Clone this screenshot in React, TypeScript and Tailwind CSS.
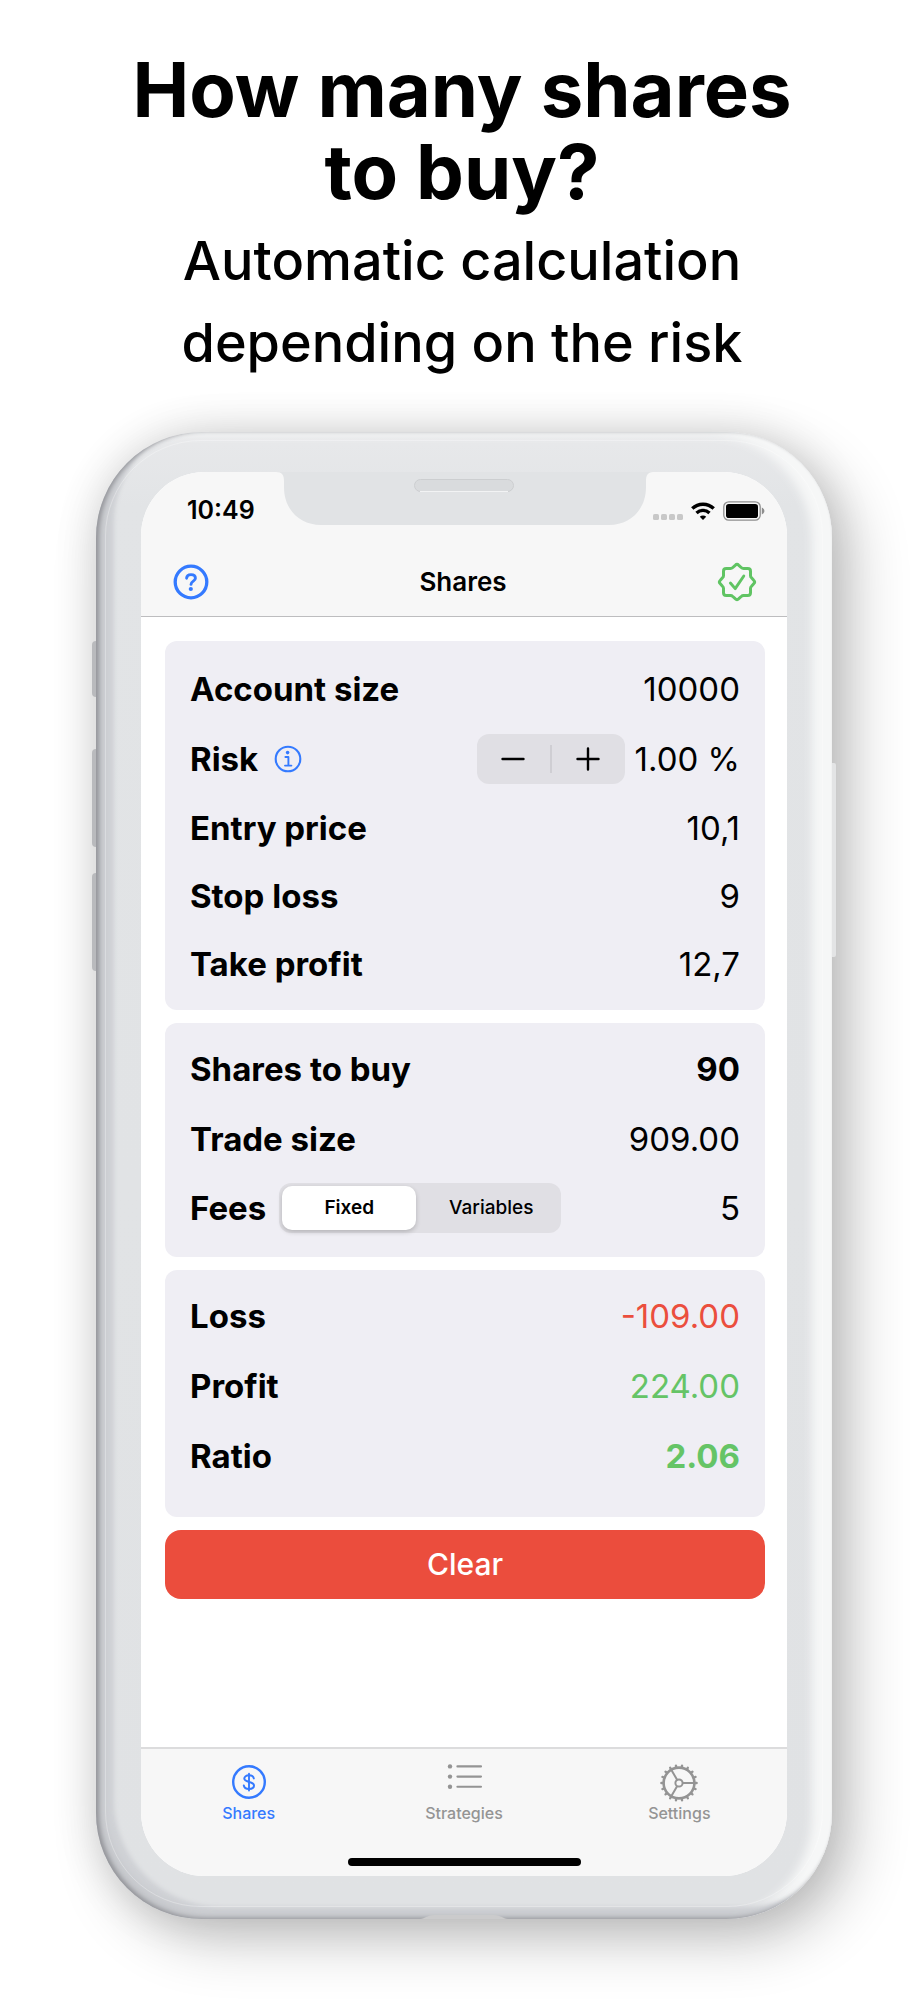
import { useState } from "react";
import type { ReactNode } from "react";

function HelpIcon() {
  return (
    <svg viewBox="0 0 36 36" className="size-9" fill="none" stroke="#347aff" strokeLinecap="round" strokeLinejoin="round">
      <circle cx="18" cy="18" r="15.8" strokeWidth="3.3" />
      <path d="M13.6 14.2C13.8 11.8 15.6 10.6 18 10.6C20.6 10.6 22.4 12 22.4 14.2C22.4 17.2 18 17 18 20.4" strokeWidth="2.9" />
      <circle cx="17.8" cy="25" r="2.1" fill="#347aff" stroke="none" />
    </svg>
  );
}

function SealIcon() {
  return (
    <svg viewBox="-20 -20 40 40" className="size-10" fill="none" stroke="#60c463" strokeLinecap="round" strokeLinejoin="round">
      <path
        strokeWidth="3"
        d="M-1.8 -16.7Q0 -18.5 1.8 -16.7L4.2 -14.5Q5.2 -13.5 6.6 -13.5H10.8Q13.5 -13.5 13.5 -10.8V-6.6Q13.5 -5.2 14.5 -4.2L16.7 -1.8Q18.5 0 16.7 1.8L14.5 4.2Q13.5 5.2 13.5 6.6V10.8Q13.5 13.5 10.8 13.5H6.6Q5.2 13.5 4.2 14.5L1.8 16.7Q0 18.5 -1.8 16.7L-4.2 14.5Q-5.2 13.5 -6.6 13.5H-10.8Q-13.5 13.5 -13.5 10.8V6.6Q-13.5 5.2 -14.5 4.2L-16.7 1.8Q-18.5 0 -16.7 -1.8L-14.5 -4.2Q-13.5 -5.2 -13.5 -6.6V-10.8Q-13.5 -13.5 -10.8 -13.5H-6.6Q-5.2 -13.5 -4.2 -14.5Z"
      />
      <path d="M-6.6 1L-1.8 6.6L6.8 -6" strokeWidth="2.9" />
    </svg>
  );
}

function InfoIcon() {
  return (
    <svg viewBox="0 0 28 28" className="size-7" fill="none" stroke="#347aff" strokeLinecap="round" strokeLinejoin="round">
      <circle cx="14" cy="14" r="12.3" strokeWidth="2.1" />
      <circle cx="13.6" cy="7.6" r="1.8" fill="#347aff" stroke="none" />
      <path d="M11.4 12H14.4V20.4M11 20.6H17.4" strokeWidth="1.9" />
    </svg>
  );
}

function SignalDots() {
  return (
    <svg viewBox="0 0 30 6" className="mt-3 h-[6px] w-[30px]" fill="#c8c8c8">
      <rect x="0" y="0" width="6" height="6" rx="1.6" />
      <rect x="8" y="0" width="6" height="6" rx="1.6" />
      <rect x="16" y="0" width="6" height="6" rx="1.6" />
      <rect x="24" y="0" width="6" height="6" rx="1.6" />
    </svg>
  );
}

function WifiIcon() {
  return (
    <svg viewBox="0 0 24 20" className="h-5 w-6" fill="none" stroke="#000">
      <path d="M1.3 7.5A15.4 15.4 0 0 1 22.7 7.5" strokeWidth="3.5" />
      <path d="M5.5 12A9.4 9.4 0 0 1 18.5 12" strokeWidth="3.3" />
      <path d="M8.8 15.7A4.6 4.6 0 0 1 15.2 15.7L12 19Z" fill="#000" stroke="none" />
    </svg>
  );
}

function BatteryIcon() {
  return (
    <svg viewBox="0 0 42 20" className="h-5 w-[42px]">
      <rect x="0.8" y="0.8" width="36.4" height="18.4" rx="5" fill="none" stroke="#8e8e8e" strokeWidth="1.3" />
      <rect x="3" y="3" width="32" height="14" rx="2.8" fill="#000" />
      <path d="M38.8 6.6C40.6 7.4 41.4 8.6 41.4 10C41.4 11.4 40.6 12.6 38.8 13.4Z" fill="#8e8e8e" />
    </svg>
  );
}

function DollarIcon() {
  return (
    <svg viewBox="-19 -19 38 38" className="size-[38px]" fill="none" stroke="currentColor" strokeLinecap="round" strokeLinejoin="round">
      <circle cy="-1" r="15.8" strokeWidth="2.4" />
      <path d="M0 -9.4V7.6" strokeWidth="1.9" />
      <path d="M4.8 -4.6C4.4 -6.6 2.6 -7.7 0 -7.7C-2.8 -7.7 -4.7 -6.4 -4.7 -4.4C-4.7 0 5 -2.2 5 2.5C5 4.7 3 5.9 0 5.9C-3 5.9 -4.8 4.6 -5.2 2.5" strokeWidth="2" />
    </svg>
  );
}

function ListIcon() {
  return (
    <svg viewBox="0 0 38 38" className="size-[38px]" fill="currentColor" stroke="currentColor" strokeLinecap="round">
      <g stroke="none">
        <circle cx="5" cy="2.4" r="2.2" />
        <circle cx="5" cy="12.6" r="2.2" />
        <circle cx="5" cy="22.8" r="2.2" />
      </g>
      <path d="M12.4 2.4H36M12.4 12.6H36M12.4 22.8H36" strokeWidth="2.1" />
    </svg>
  );
}

const GEAR_TEETH = Array.from({ length: 18 }, (_, i) => i * 20);

function GearIcon() {
  return (
    <svg viewBox="-19 -19 38 38" className="size-[38px]" fill="none" stroke="currentColor" strokeLinecap="round">
      <circle r="15.4" strokeWidth="2.6" />
      {GEAR_TEETH.map((angle) => (
        <path key={angle} d="M16 0H17.6" strokeWidth="2.4" transform={`rotate(${angle})`} />
      ))}
      <circle r="3.6" strokeWidth="2" />
      <path d="M4.4 0H15M-2.2 3.8L-7.6 13.1M-2.2 -3.8L-7.6 -13.1" strokeWidth="2" />
    </svg>
  );
}

const LABEL = "shrink-0 text-[33px] leading-10 font-bold text-black";
const VALUE = "text-[33px] leading-10";

function Card({ children, className }: { children: ReactNode; className: string }) {
  return <section className={`rounded-xl bg-[#efeef4] px-[25px] ${className}`}>{children}</section>;
}

function ResultRow({ label, value, tone }: { label: string; value: string; tone: string }) {
  return (
    <div className="flex h-[70px] items-center justify-between gap-3">
      <span className={LABEL}>{label}</span>
      <output className={`${VALUE} ${tone}`}>{value}</output>
    </div>
  );
}

function FieldRow({
  id,
  label,
  value,
  onChange,
  height,
}: {
  id: string;
  label: string;
  value: string;
  onChange: (value: string) => void;
  height: string;
}) {
  return (
    <div className={`flex items-center gap-3 ${height}`}>
      <label htmlFor={id} className={LABEL}>
        {label}
      </label>
      <input
        id={id}
        inputMode="decimal"
        value={value}
        onChange={(e) => onChange(e.target.value)}
        className={`${VALUE} w-0 min-w-0 flex-1 bg-transparent text-right text-black outline-none`}
      />
    </div>
  );
}

function StepButton({ label, path, onClick }: { label: string; path: string; onClick: () => void }) {
  return (
    <button type="button" aria-label={label} onClick={onClick} className="flex flex-1 items-center justify-center self-stretch">
      <svg viewBox="0 0 24 24" className="size-6" fill="none" stroke="#000" strokeWidth="2.4" strokeLinecap="round">
        <path d={path} />
      </svg>
    </button>
  );
}

const toNumber = (text: string) => Number(text.replace(",", ".")) || 0;

const TABS = [
  { id: "shares", label: "Shares", icon: <DollarIcon /> },
  { id: "strategies", label: "Strategies", icon: <ListIcon /> },
  { id: "settings", label: "Settings", icon: <GearIcon /> },
];

const FEE_MODES = ["Fixed", "Variables"];

export default function App() {
  const [account, setAccount] = useState("10000");
  const [risk, setRisk] = useState(1);
  const [entry, setEntry] = useState("10,1");
  const [stop, setStop] = useState("9");
  const [target, setTarget] = useState("12,7");
  const [fees, setFees] = useState("5");
  const [feeMode, setFeeMode] = useState("Fixed");
  const [tab, setTab] = useState("shares");

  const perShareRisk = toNumber(entry) - toNumber(stop);
  const shares = perShareRisk > 0 ? Math.floor((toNumber(account) * risk) / 100 / perShareRisk) : 0;
  const tradeSize = shares * toNumber(entry);
  const roundTripFees =
    shares === 0 ? 0 : feeMode === "Fixed" ? 2 * toNumber(fees) : (2 * tradeSize * toNumber(fees)) / 100;
  const loss = shares * perShareRisk + roundTripFees;
  const profit = shares * (toNumber(target) - toNumber(entry)) - roundTripFees;
  const ratio = loss > 0 ? profit / loss : 0;

  const clear = () => {
    setAccount("");
    setRisk(1);
    setEntry("");
    setStop("");
    setTarget("");
    setFees("");
  };

  return (
    <div className="min-h-screen overflow-hidden bg-white pb-[81px] font-['Inter','Liberation_Sans',sans-serif] text-black">
      <header className="px-4 pt-12 text-center">
        <h1 className="text-[76px] leading-[82px] font-bold">
          How many shares
          <br />
          to buy?
        </h1>
        <p className="mt-2 text-[54px] leading-[82px] font-medium">
          Automatic calculation
          <br />
          depending on the risk
        </p>
      </header>

      <div className="mt-12 pr-[92px] pl-24">
        <div className="relative rounded-[106px] bg-linear-to-b from-[#e8e9eb] via-[#e2e4e6] via-5% to-[#e0e2e4] px-[45px] pt-10 pb-[43px] shadow-[18px_20px_60px_rgba(0,0,0,0.24),0_0_44px_rgba(0,0,0,0.12)]">
          <div className="absolute top-[209px] -left-1 h-14 w-1 rounded-l-sm bg-[#b9babd]" />
          <div className="absolute top-[317px] -left-1 h-[98px] w-1 rounded-l-sm bg-[#b9babd]" />
          <div className="absolute top-[441px] -left-1 h-[98px] w-1 rounded-l-sm bg-[#b9babd]" />
          <div className="absolute top-[331px] -right-1 h-[194px] w-[6px] rounded-r-xs border-l border-[#cfd1d3] bg-[#e3e4e5]" />
          <div className="pointer-events-none absolute inset-0 rounded-[106px] shadow-[inset_3px_-1px_4px_#95969b,inset_10px_-8px_8px_-2px_#c4c6ca,inset_20px_-14px_4px_-2px_#d0d2d6,inset_-20px_3px_10px_#f6f7f7]" />
          <div className="pointer-events-none absolute inset-x-[9px] top-2 bottom-3 rounded-[96px] border border-white/30" />
          <svg viewBox="0 0 88 5" className="absolute bottom-0 left-[324px] h-[5px] w-[88px]" fill="#cbcbcc">
            <path d="M0 5C5 4.6 8 1 14 1H74C80 1 83 4.6 88 5Z" />
          </svg>

          <div className="relative flex flex-col overflow-hidden rounded-[64px] bg-white">
            <svg viewBox="0 0 378 54" className="absolute inset-x-0 top-0 mx-auto h-[54px] w-[378px]" fill="#e1e3e5">
              <path d="M1 0H379C373 0 371 3 371 9V15C371 38 355 53 334 53H46C25 53 9 38 9 15V9C9 3 7 0 1 0Z" />
              <rect x="139.5" y="7.5" width="99" height="12" rx="6" fill="#d9dbdd" stroke="#ccced0" />
              <path d="M145 19.5H233" stroke="#f2f3f4" fill="none" />
            </svg>

            <div className="border-b border-[#bdbdbf] bg-[#f7f7f7]">
              <div className="flex h-[77px] items-center justify-between pr-[22px] pl-[46px]">
                <time className="text-[25px] font-semibold">10:49</time>
                <div className="flex items-center gap-2">
                  <SignalDots />
                  <WifiIcon />
                  <BatteryIcon />
                </div>
              </div>
              <div className="flex h-[67px] items-center justify-between pr-[30px] pb-[2px] pl-8">
                <button type="button" aria-label="Help">
                  <HelpIcon />
                </button>
                <h2 className="text-[26px] font-semibold">Shares</h2>
                <button type="button" aria-label="Verified">
                  <SealIcon />
                </button>
              </div>
            </div>

            <main className="flex flex-col gap-[13px] pt-6 pr-[22px] pb-[148px] pl-6">
              <Card className="pt-[13px] pb-3">
                <FieldRow id="account" label="Account size" value={account} onChange={setAccount} height="h-[70px]" />
                <div className="flex h-[70px] items-center">
                  <span className={LABEL}>Risk</span>
                  <button type="button" aria-label="About risk" className="ml-4">
                    <InfoIcon />
                  </button>
                  <div className="ml-auto flex h-[50px] w-[148px] items-center rounded-xl bg-[#e0dfe4]">
                    <StepButton label="Decrease risk" path="M1.5 12H22.5" onClick={() => setRisk((r) => Math.max(0, r - 0.25))} />
                    <span className="h-7 w-[2px] bg-[#cfced3]" />
                    <StepButton label="Increase risk" path="M1.5 12H22.5M12 1.5V22.5" onClick={() => setRisk((r) => r + 0.25)} />
                  </div>
                  <output className={`${VALUE} ml-[10px]`}>{risk.toFixed(2)} %</output>
                </div>
                <FieldRow id="entry" label="Entry price" value={entry} onChange={setEntry} height="h-[68px]" />
                <FieldRow id="stop" label="Stop loss" value={stop} onChange={setStop} height="h-[68px]" />
                <FieldRow id="target" label="Take profit" value={target} onChange={setTarget} height="h-[68px]" />
              </Card>

              <Card className="pt-[11px] pb-[15px]">
                <ResultRow label="Shares to buy" value={String(shares)} tone="font-bold" />
                <ResultRow label="Trade size" value={tradeSize.toFixed(2)} tone="text-black" />
                <div className="flex h-[68px] items-center">
                  <label htmlFor="fees" className={LABEL}>
                    Fees
                  </label>
                  <div role="radiogroup" aria-label="Fee type" className="ml-[13px] flex h-[50px] w-[282px] rounded-xl bg-[#e0dfe4] p-[3px]">
                    {FEE_MODES.map((mode) => (
                      <label
                        key={mode}
                        className="flex flex-1 items-center justify-center rounded-[10px] pl-2 text-[19px] font-medium has-checked:flex-none has-checked:basis-[134px] has-checked:bg-white has-checked:pl-0 has-checked:font-semibold has-checked:shadow-[0_2px_5px_rgba(0,0,0,0.2)]"
                      >
                        <input
                          type="radio"
                          name="fee-mode"
                          value={mode}
                          checked={feeMode === mode}
                          onChange={() => setFeeMode(mode)}
                          className="sr-only"
                        />
                        {mode}
                      </label>
                    ))}
                  </div>
                  <input
                    id="fees"
                    inputMode="decimal"
                    value={fees}
                    onChange={(e) => setFees(e.target.value)}
                    className={`${VALUE} w-0 min-w-0 flex-1 bg-transparent text-right outline-none`}
                  />
                </div>
              </Card>

              <Card className="pt-[11px] pb-[26px]">
                <ResultRow label="Loss" value={(-loss).toFixed(2)} tone="text-[#eb4e3d]" />
                <ResultRow label="Profit" value={profit.toFixed(2)} tone="text-[#65c466]" />
                <ResultRow label="Ratio" value={ratio.toFixed(2)} tone="font-bold text-[#65c466]" />
              </Card>

              <button
                type="button"
                onClick={clear}
                className="h-[69px] rounded-2xl bg-[#eb4d3d] text-[30px] font-medium text-white"
              >
                Clear
              </button>
            </main>

            <footer className="border-t-2 border-[#dcdcdd] bg-[#f7f7f7] pt-[15px] pb-[10px]">
              <nav className="grid grid-cols-3">
                {TABS.map(({ id, label, icon }) => (
                  <a
                    key={id}
                    href={`#${id}`}
                    onClick={() => setTab(id)}
                    className={`flex flex-col items-center text-base leading-[22px] font-medium ${
                      tab === id ? "text-[#347aff]" : "text-[#949494]"
                    }`}
                  >
                    {icon}
                    {label}
                  </a>
                ))}
              </nav>
              <div className="mx-auto mt-[34px] h-2 w-[233px] rounded-full bg-black" />
            </footer>
          </div>
        </div>
      </div>
    </div>
  );
}
